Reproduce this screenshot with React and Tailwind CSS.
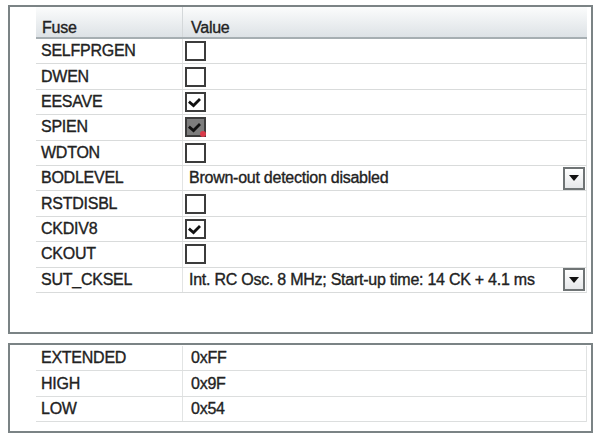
const fuses = [
  { name: "SELFPRGEN", type: "check", value: false },
  { name: "DWEN", type: "check", value: false },
  { name: "EESAVE", type: "check", value: true },
  { name: "SPIEN", type: "check", value: true, locked: true },
  { name: "WDTON", type: "check", value: false },
  { name: "BODLEVEL", type: "select", value: "Brown-out detection disabled" },
  { name: "RSTDISBL", type: "check", value: false },
  { name: "CKDIV8", type: "check", value: true },
  { name: "CKOUT", type: "check", value: false },
  { name: "SUT_CKSEL", type: "select", value: "Int. RC Osc. 8 MHz; Start-up time: 14 CK + 4.1 ms" },
];

const bytes = [
  { name: "EXTENDED", value: "0xFF" },
  { name: "HIGH", value: "0x9F" },
  { name: "LOW", value: "0x54" },
];

function CheckBox({ checked, locked }) {
  return (
    <div
      className={`relative w-[21px] h-[20px] border-2 border-[#3c3c3c] ${locked ? "bg-[#7d7d7d]" : "bg-white"}`}
    >
      {checked && (
        <svg viewBox="0 0 17 16" className="absolute left-0 top-0 w-[17px] h-[16px]">
          <path d="M3 8.5 L6.5 11.5 L12 6" fill="none" stroke="#111" strokeWidth="2.8" strokeLinecap="square" />
        </svg>
      )}
      {locked && <span className="absolute right-[-2px] bottom-[-2px] w-[6px] h-[6px] rounded-full bg-[#d83a4a]" />}
    </div>
  );
}

function DropButton() {
  return (
    <div className="w-[22px] h-[23px] border-2 border-[#6f7475] bg-gradient-to-b from-white to-[#e6e8ea] flex items-center justify-center">
      <svg viewBox="0 0 10 6" className="w-[10px] h-[6px]">
        <path d="M0 0 H10 L5 6 Z" fill="#111" />
      </svg>
    </div>
  );
}

export default function App() {
  return (
    <div
      className="w-[603px] h-[438px] bg-white pt-[5px] pl-[8px] text-[16px] text-[#222] tracking-[-0.25px] [-webkit-text-stroke:0.35px_#222]"
      style={{ fontFamily: '"Liberation Sans", Arial, sans-serif' }}
    >
      {/* fuse table */}
      <div className="w-[585px] h-[329px] border-2 border-[#7b8385] pl-[26px] pr-[4px]">
        <div className="h-[32px] flex bg-gradient-to-b from-[#fbfcfc] to-[#dde2e6] border-b-2 border-[#a6aeb2]">
          <div className="w-[147px] pl-[6px] pt-[9px] border-r border-[#d4d8da]">Fuse</div>
          <div className="flex-1 pl-[8px] pt-[9px]">Value</div>
        </div>
        {fuses.map((f) => (
          <div key={f.name} className="h-[25.4px] flex border-b border-[#d9dbdb] border-r border-r-[#e4e6e6]">
            <div className="w-[147px] pl-[5px] flex items-center border-r border-[#e2e4e4]">{f.name}</div>
            {f.type === "check" ? (
              <div className="flex-1 pl-[2px] flex items-center">
                <CheckBox checked={f.value} locked={f.locked} />
              </div>
            ) : (
              <div className="flex-1 pl-[6px] pr-[1px] flex items-center justify-between">
                <span>{f.value}</span>
                <DropButton />
              </div>
            )}
          </div>
        ))}
      </div>

      {/* fuse bytes */}
      <div className="mt-[9px] w-[585px] h-[90px] border-2 border-[#7b8385] pl-[26px] pr-[4px] pt-[1px]">
        <div className="border-r border-[#e0e2e2]">
          {bytes.map((b) => (
            <div key={b.name} className="h-[25.4px] flex border-b border-[#dcdede]">
              <div className="w-[147px] pl-[5px] flex items-center border-r border-[#e2e4e4]">{b.name}</div>
              <div className="flex-1 pl-[8px] flex items-center">{b.value}</div>
            </div>
          ))}
        </div>
      </div>
    </div>
  );
}
